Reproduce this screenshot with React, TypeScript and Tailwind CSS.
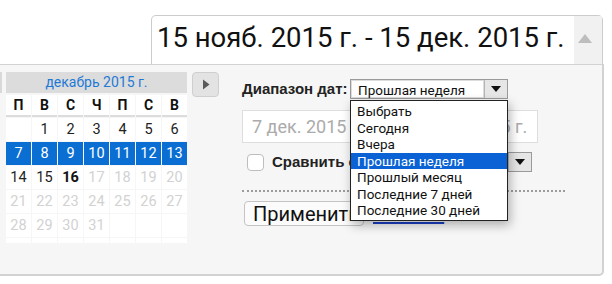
import React from 'react';

const dayNames = ['П', 'В', 'С', 'Ч', 'П', 'С', 'В'];

type Cell = { d?: number; kind?: 'sel' | 'norm' | 'bold' | 'off' };

const weeks: Cell[][] = [
  [{}, { d: 1, kind: 'norm' }, { d: 2, kind: 'norm' }, { d: 3, kind: 'norm' }, { d: 4, kind: 'norm' }, { d: 5, kind: 'norm' }, { d: 6, kind: 'norm' }],
  [7, 8, 9, 10, 11, 12, 13].map((d) => ({ d, kind: 'sel' as const })),
  [
    { d: 14, kind: 'norm' },
    { d: 15, kind: 'norm' },
    { d: 16, kind: 'bold' },
    ...[17, 18, 19, 20].map((d) => ({ d, kind: 'off' as const })),
  ],
  [21, 22, 23, 24, 25, 26, 27].map((d) => ({ d, kind: 'off' as const })),
  [{ d: 28, kind: 'off' }, { d: 29, kind: 'off' }, { d: 30, kind: 'off' }, { d: 31, kind: 'off' }, {}, {}, {}],
  [{}, {}, {}, {}, {}, {}, {}],
];

const options = ['Выбрать', 'Сегодня', 'Вчера', 'Прошлая неделя', 'Прошлый месяц', 'Последние 7 дней', 'Последние 30 дней'];

function cellClass(kind?: Cell['kind']) {
  if (kind === 'sel') return 'bg-[#0b6ed3] text-white';
  if (kind === 'bold') return 'bg-white text-[#111] font-bold';
  if (kind === 'off') return 'bg-white text-[#d2d2d2]';
  return 'bg-white text-[#222]';
}

function Calendar() {
  return (
    <div className="flex items-start">
      {/* end of previous month header */}
      <div className="w-[2px] h-[21px] bg-[#d9d9d9] mr-[4px]" />
      <div className="w-[181px] h-[171px] overflow-hidden">
        <div className="h-[21px] bg-[#dcdcdc] flex items-center justify-center text-[14px] text-[#1f7ad6]">
          декабрь 2015 г.
        </div>
        <div className="mt-[2px] grid grid-cols-[repeat(7,25px)] gap-x-px">
          {dayNames.map((n, i) => (
            <div key={i} className="h-[22px] bg-white border-b-2 border-[#dcdcdc] flex items-center justify-center text-[14px] font-bold text-[#111]">
              {n}
            </div>
          ))}
        </div>
        <div className="mt-px grid grid-cols-[repeat(7,25px)] gap-px">
          {weeks.flat().map((c, i) => (
            <div key={i} className={`h-[23px] flex items-center justify-center text-[14.5px] ${cellClass(c.kind)}`}>
              {c.d ?? ''}
            </div>
          ))}
        </div>
      </div>
      <div className="ml-[5px] w-[27px] h-[25px] rounded-[4px] border border-[#cfcfcf] bg-[#e3e3e3] flex items-center justify-center">
        <svg width="8" height="11" viewBox="0 0 8 11">
          <path d="M1 0.5 L7.5 5.5 L1 10.5 Z" fill="#5a5a5a" />
        </svg>
      </div>
    </div>
  );
}

function ArrowDown() {
  return (
    <svg width="10" height="6" viewBox="0 0 10 6">
      <path d="M0 0 H10 L5 6 Z" fill="#111" />
    </svg>
  );
}

function RangeForm() {
  return (
    <div className="ml-[23px] pt-[7px] w-[323px]">
      <div className="flex items-center h-[20px]">
        <span className="w-[108px] text-[15px] font-bold text-[#222] font-['Liberation_Sans',sans-serif] whitespace-nowrap">Диапазон дат:</span>
        <div className="relative">
          <div className="w-[158px] h-[20px] flex border border-[#9a9a9a] bg-white">
            <span className="flex-1 pl-[6px] text-[13.5px] leading-[18px] text-[#111] border border-[#dcdcdc]">Прошлая неделя</span>
            <span className="w-[23px] bg-[#e6e6e6] border-l border-[#b5b5b5] flex items-center justify-center">
              <ArrowDown />
            </span>
          </div>
          <ul className="absolute left-0 top-[21px] z-10 w-[158px] pt-[2px] pb-[1px] bg-white border border-[#222] shadow-[2px_4px_10px_rgba(0,0,0,0.3)]">
            {options.map((o, i) => (
              <li
                key={o}
                className={`h-[16.5px] pl-[6px] text-[13.5px] leading-[16.5px] ${i === 3 ? 'bg-[#0a62d5] text-white' : 'text-[#111]'}`}
              >
                {o}
              </li>
            ))}
          </ul>
        </div>
      </div>

      <div className="mt-[11px] flex items-center">
        <div className="w-[142px] h-[33px] border border-[#dedede] bg-white pl-[9px] flex items-center text-[18px] text-[#ababab] whitespace-nowrap overflow-hidden">
          7 дек. 2015 г.
        </div>
        <span className="w-[12px] text-center text-[#999]">-</span>
        <div className="w-[142px] h-[33px] border border-[#dedede] bg-white pl-[9px] flex items-center text-[18px] text-[#ababab] whitespace-nowrap overflow-hidden">
          13 дек. 2015 г.
        </div>
      </div>

      <div className="mt-[9px] w-[290px] h-[20px] flex items-center">
        <span className="ml-[5px] w-[17px] h-[17px] rounded-[4px] border border-[#bdbdbd] bg-white" />
        <span className="ml-[8px] text-[15px] font-bold text-[#222] font-['Liberation_Sans',sans-serif]">Сравнить с</span>
        <div className="ml-auto w-[150px] h-[20px] flex border border-[#9a9a9a] bg-white">
          <span className="flex-1" />
          <span className="w-[23px] bg-[#e6e6e6] border-l border-[#b5b5b5] flex items-center justify-center">
            <ArrowDown />
          </span>
        </div>
      </div>

      <div className="mt-[18px] border-t-2 border-dotted border-[#9c9c9c]" />

      <div className="mt-[9px] flex items-center">
        <button className="ml-[2px] w-[120px] h-[25px] rounded-[4px] border border-[#c4c4c4] bg-[#fbfbfb] pl-[8px] text-left text-[20px] leading-[22px] text-[#111] whitespace-nowrap overflow-hidden">
          Применить
        </button>
        <a className="ml-[9px] text-[20px] leading-[24px] text-[#1b3fc4] underline">Отмена</a>
      </div>
    </div>
  );
}

export default function App() {
  return (
    <div className="w-[612px] h-[284px] bg-white overflow-hidden font-['Roboto','Liberation_Sans',sans-serif]">
      <div className="pt-[15px] pl-[151px]">
        <div className="w-[452px] h-[49px] flex border border-b-0 border-[#cccccc] rounded-t-[5px] bg-white">
          <span className="flex-1 pl-[5px] pb-[4px] flex items-center text-[27.5px] text-[#111] whitespace-nowrap">
            15 нояб. 2015 г. - 15 дек. 2015 г.
          </span>
          <span className="w-[28px] bg-[#f1f1f1] flex items-center pl-[4px] pb-[4px]">
            <svg width="14" height="9" viewBox="0 0 14 9">
              <path d="M0 9 L7 0 L14 9 Z" fill="#bdbdbd" />
            </svg>
          </span>
        </div>
      </div>
      <div className="w-[604px] h-[212px] bg-[#f6f6f6] border-t border-r-2 border-b-2 border-[#d2d2d2] rounded-br-[5px] pt-[7px] flex items-start">
        <Calendar />
        <RangeForm />
      </div>
    </div>
  );
}
